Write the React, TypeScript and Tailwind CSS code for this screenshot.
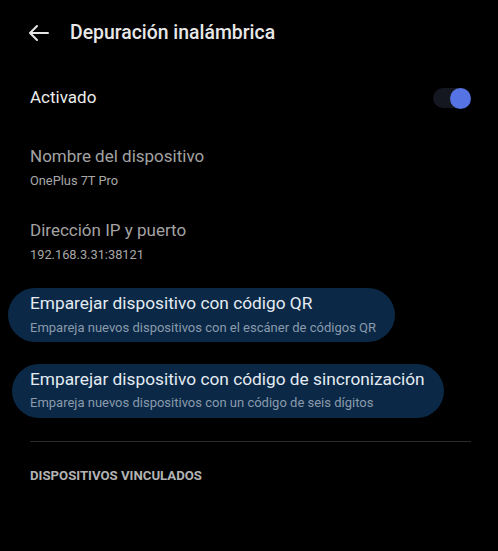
export default function App() {
  return (
    <div
      className="w-[498px] h-[551px] bg-black text-white overflow-hidden"
      style={{ fontFamily: 'Roboto, "Noto Sans", sans-serif' }}
    >
      <div className="h-[66px] flex items-center pl-[27px]">
        <svg className="w-[24px] h-[24px] text-[#e6e6e6]" viewBox="0 0 24 24" fill="none" stroke="currentColor">
          <path strokeLinecap="round" strokeLinejoin="round" strokeWidth={2} d="M21 12H3.5M10 5l-7 7 7 7" />
        </svg>
        <h1 className="ml-[19px] text-[19.4px] font-medium text-[#e8e8e8]">Depuración inalámbrica</h1>
      </div>

      <div className="h-[64px] flex items-center justify-between pl-[30px] pr-[27px]">
        <span className="text-[17px] text-[#ececec]">Activado</span>
        <div className="relative w-[38px] h-[20px] flex items-center">
          <div className="absolute left-0 w-[34px] h-[20px] rounded-full bg-[#141720]" />
          <div className="absolute right-0 w-[21px] h-[21px] rounded-full bg-[#5673e3]" />
        </div>
      </div>

      <div className="pl-[30px] mt-[15px]">
        <p className="text-[17px] leading-[22px] text-[#a3a3a3]">Nombre del dispositivo</p>
        <p className="mt-[6px] text-[12.8px] leading-[16px] text-[#a8a8a8]">OnePlus 7T Pro</p>
      </div>

      <div className="pl-[30px] mt-[30px]">
        <p className="text-[17px] leading-[22px] text-[#a3a3a3]">Dirección IP y puerto</p>
        <p className="mt-[6px] text-[12.8px] leading-[16px] text-[#a8a8a8]">192.168.3.31:38121</p>
      </div>

      <div className="mt-[25px] ml-[8px] w-[387px] h-[54px] rounded-[27px] bg-[#0b2946] pl-[22px] pt-[4px]">
        <p className="text-[17.3px] leading-[22px] text-[#e4ebf2]">Emparejar dispositivo con código QR</p>
        <p className="mt-[6px] text-[13px] leading-[16px] text-[#8a9aac]">
          Empareja nuevos dispositivos con el escáner de códigos QR
        </p>
      </div>

      <div className="mt-[22px] ml-[12px] w-[432px] h-[54px] rounded-[27px] bg-[#0b2946] pl-[18px] pt-[4px]">
        <p className="text-[17.3px] leading-[22px] text-[#e4ebf2]">
          Emparejar dispositivo con código de sincronización
        </p>
        <p className="mt-[5px] text-[13px] leading-[16px] text-[#8a9aac]">
          Empareja nuevos dispositivos con un código de seis dígitos
        </p>
      </div>

      <div className="mt-[23px] ml-[30px] w-[441px] h-[1px] bg-[#2a2a2a]" />

      <p className="mt-[26px] pl-[30px] text-[13.2px] leading-[16px] font-bold text-[#b3b3b3]">
        DISPOSITIVOS VINCULADOS
      </p>
    </div>
  );
}
